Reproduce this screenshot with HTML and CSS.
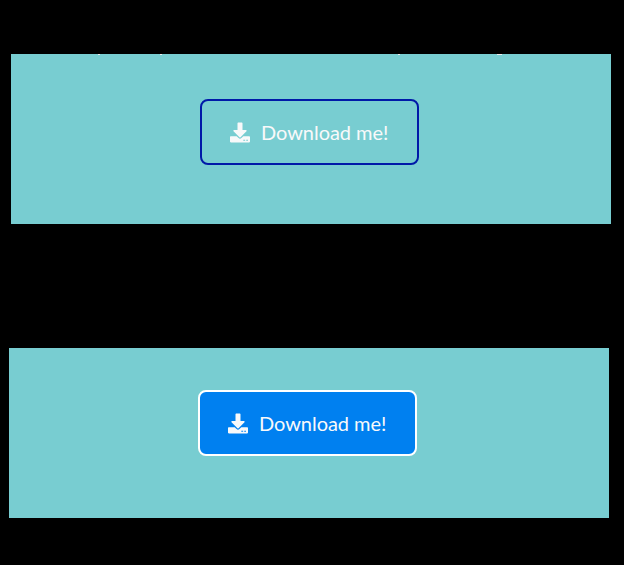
FILE: index.html
```
<!DOCTYPE html>
<html lang="en">
<head>
<meta charset="utf-8">
<title>Download</title>
<link rel="stylesheet" href="styles.css">
</head>
<body>
<section class="panel normal">
  <svg class="descenders" viewBox="0 0 600 1" aria-hidden="true"><path d="M87 0h2v1h-2zM149 0h2v1h-2zM387 0h2v1h-2zM486 0h5v1h-5z"/></svg>
  <button class="download"><svg class="icon" viewBox="0 0 512 512" aria-hidden="true"><path d="M216 0h80c13.3 0 24 10.7 24 24v168h87.7c17.8 0 26.7 21.5 14.1 34.1L269.7 378.3c-7.5 7.5-19.8 7.5-27.3 0L90.1 226.1c-12.6-12.6-3.7-34.1 14.1-34.1H192V24c0-13.3 10.7-24 24-24zm296 376v112c0 13.3-10.7 24-24 24H24c-13.3 0-24-10.7-24-24V376c0-13.3 10.7-24 24-24h146.7l49 49c20.1 20.1 52.5 20.1 72.6 0l49-49H488c13.3 0 24 10.7 24 24zM340 445v26h48v-26zM416 445v26h44v-26z" fill-rule="evenodd"/></svg><span>Download me!</span></button>
</section>
<section class="panel active">
  <button class="download"><svg class="icon" viewBox="0 0 512 512" aria-hidden="true"><path d="M216 0h80c13.3 0 24 10.7 24 24v168h87.7c17.8 0 26.7 21.5 14.1 34.1L269.7 378.3c-7.5 7.5-19.8 7.5-27.3 0L90.1 226.1c-12.6-12.6-3.7-34.1 14.1-34.1H192V24c0-13.3 10.7-24 24-24zm296 376v112c0 13.3-10.7 24-24 24H24c-13.3 0-24-10.7-24-24V376c0-13.3 10.7-24 24-24h146.7l49 49c20.1 20.1 52.5 20.1 72.6 0l49-49H488c13.3 0 24 10.7 24 24zM340 445v26h48v-26zM416 445v26h44v-26z" fill-rule="evenodd"/></svg><span>Download me!</span></button>
</section>
</body>
</html>
```
FILE: styles.css
```
* { box-sizing: border-box; }
body {
  margin: 0;
  padding: 54px 0 0 9px;
  height: 565px;
  overflow: hidden;
  background: #000;
  display: flex;
  flex-direction: column;
  gap: 124px;
}
.panel {
  position: relative;
  width: 600px;
  height: 170px;
  flex: none;
  background: #78cdd1;
  padding: 45px 0 0 189px;
}
.normal { margin-left: 2px; }
.active { padding-top: 42px; }
.descenders {
  position: absolute;
  top: 0;
  left: 0;
  width: 600px;
  height: 1px;
  fill: #f0eeee;
}
.download {
  display: flex;
  align-items: center;
  gap: 11px;
  width: 219px;
  height: 66px;
  margin: 0;
  padding: 0 28px;
  border: 2px solid #0019a8;
  border-radius: 8px;
  background: transparent;
  color: #f8f9fa;
  font: 20px/30px Lato, sans-serif;
  letter-spacing: -0.04px;
  white-space: nowrap;
}
.active .download {
  background: #0080f0;
  border-color: #fff;
}
.icon {
  display: block;
  flex: none;
  width: 20px;
  height: 20px;
  overflow: visible;
  fill: currentColor;
  transform: translateY(0.4px);
}
```
